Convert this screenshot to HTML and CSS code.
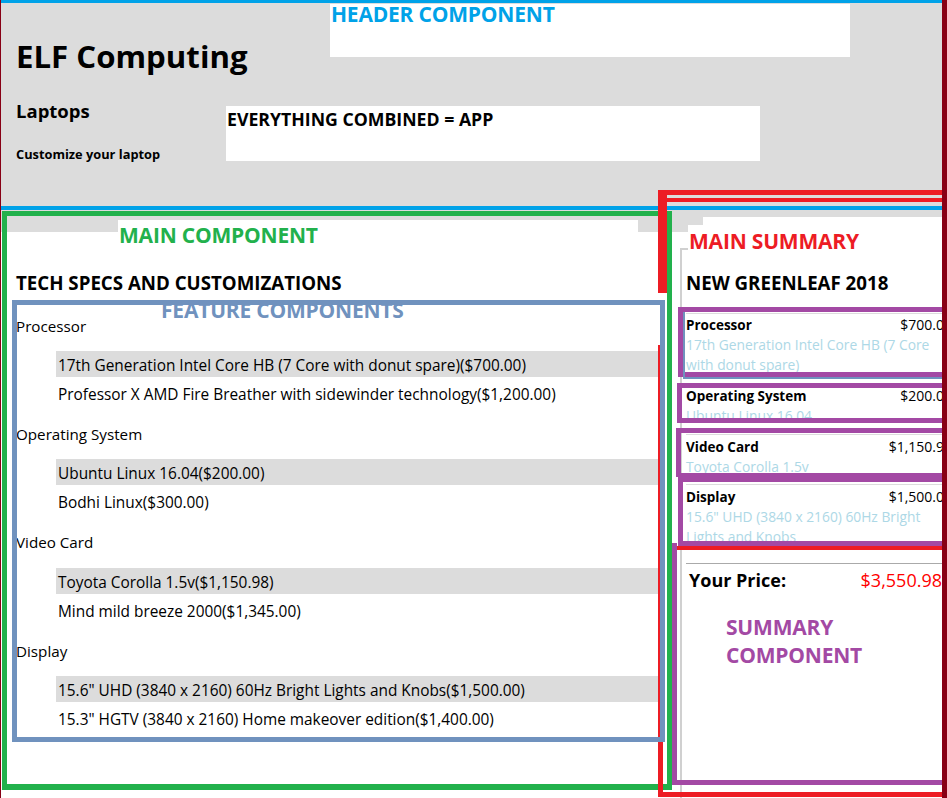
FILE: index.html
```html
<!DOCTYPE html>
<html lang="en">
<head>
<meta charset="utf-8">
<title>ELF Computing</title>
<link rel="stylesheet" href="styles.css">
</head>
<body>
<div class="app">
  <header class="header">
    <h1 class="header__title">ELF Computing</h1>
    <h3 class="header__sub">Laptops</h3>
    <h5 class="header__tag">Customize your laptop</h5>
  </header>
  <main class="main">
    <form class="main__form">
      <h2 class="main__heading">TECH SPECS AND CUSTOMIZATIONS</h2>
      <div class="feature">
        <div class="feature__name">Processor</div>
        <div class="feature__item feature__item--selected">17th Generation Intel Core HB (7 Core with donut spare)($700.00)</div>
        <div class="feature__item">Professor X AMD Fire Breather with sidewinder technology($1,200.00)</div>
      </div>
      <div class="feature">
        <div class="feature__name">Operating System</div>
        <div class="feature__item feature__item--selected">Ubuntu Linux 16.04($200.00)</div>
        <div class="feature__item">Bodhi Linux($300.00)</div>
      </div>
      <div class="feature">
        <div class="feature__name">Video Card</div>
        <div class="feature__item feature__item--selected">Toyota Corolla 1.5v($1,150.98)</div>
        <div class="feature__item">Mind mild breeze 2000($1,345.00)</div>
      </div>
      <div class="feature">
        <div class="feature__name">Display</div>
        <div class="feature__item feature__item--selected">15.6" UHD (3840 x 2160) 60Hz Bright Lights and Knobs($1,500.00)</div>
        <div class="feature__item">15.3" HGTV (3840 x 2160) Home makeover edition($1,400.00)</div>
      </div>
    </form>
    <section class="summary">
      <h2 class="main__heading summary__heading">NEW GREENLEAF 2018</h2>
      <div class="summary__option">
        <div class="summary__row"><span class="summary__name">Processor</span><span class="summary__cost">$700.00</span></div>
        <div class="summary__value">17th Generation Intel Core HB (7 Core with donut spare)</div>
      </div>
      <div class="summary__option">
        <div class="summary__row"><span class="summary__name">Operating System</span><span class="summary__cost">$200.00</span></div>
        <div class="summary__value">Ubuntu Linux 16.04</div>
      </div>
      <div class="summary__option">
        <div class="summary__row"><span class="summary__name">Video Card</span><span class="summary__cost">$1,150.98</span></div>
        <div class="summary__value">Toyota Corolla 1.5v</div>
      </div>
      <div class="summary__option">
        <div class="summary__row"><span class="summary__name">Display</span><span class="summary__cost">$1,500.00</span></div>
        <div class="summary__value">15.6" UHD (3840 x 2160) 60Hz Bright Lights and Knobs</div>
      </div>
      <div class="summary__total">
        <span class="summary__total-label">Your Price:</span>
        <span class="summary__total-value">$3,550.98</span>
      </div>
    </section>
  </main>

  <div class="notes">
    <div class="box box--header"></div>
    <div class="box box--main"></div>
    <div class="box box--summary"></div>
    <div class="bar bar--red-thick"></div>
    <div class="bar bar--red-thin"></div>
    <div class="bar bar--red-inner"></div>
    <div class="bar bar--red-divider"></div>
    <div class="box box--features"></div>
    <div class="box box--p1"></div>
    <div class="bar bar--steel-left"></div>
    <div class="bar bar--steel-bottom"></div>
    <div class="box box--p2"></div>
    <div class="box box--p3"></div>
    <div class="box box--p4"></div>
    <div class="box box--p5"></div>

    <div class="label label--header">HEADER COMPONENT</div>
    <div class="label label--app">EVERYTHING COMBINED = APP</div>
    <div class="label label--main">MAIN COMPONENT</div>
    <div class="label label--summary-cover"></div>
    <div class="label label--summary">MAIN SUMMARY</div>
    <div class="label label--features">FEATURE COMPONENTS</div>
    <div class="label label--summary-comp">SUMMARY<br>COMPONENT</div>

    <div class="box box--app"></div>
  </div>
</div>
</body>
</html>
```

FILE: styles.css
```css
html, body {
  margin: 0;
  padding: 0;
  background: #fff;
  overflow: hidden;
}

.app {
  position: relative;
  width: 947px;
  height: 798px;
  overflow: hidden;
  font-family: "Open Sans", "Noto Sans", sans-serif;
  color: #000;
}

/* ---------- header ---------- */
.header {
  height: 232px;
  box-sizing: border-box;
  background: #dcdcdc;
  padding: 40px 0 0 16px;
}

.header__title {
  margin: 0;
  font-size: 31.2px;
  line-height: 32px;
  font-weight: 700;
}

.header__sub {
  margin: 29.6px 0 0;
  font-size: 18.5px;
  line-height: 18.5px;
  font-weight: 700;
}

.header__tag {
  margin: 27.7px 0 0;
  font-size: 12.8px;
  line-height: 13px;
  font-weight: 700;
}

/* ---------- main ---------- */
.main {
  display: flex;
  align-items: flex-start;
}

.main__form {
  flex: none;
  width: 664px;
  margin: 0;
  padding: 42px 0 0 16px;
  box-sizing: border-box;
}

.main__heading {
  margin: 0;
  font-size: 18.7px;
  line-height: 18px;
  font-weight: 700;
}

.feature {
  margin-top: 23.5px;
}

.feature + .feature {
  margin-top: 17.7px;
}

.feature__name {
  font-size: 15.2px;
  line-height: 20px;
  margin-bottom: 15.5px;
}

.feature__item {
  margin-left: 40px;
  margin-right: 0;
  height: 26px;
  box-sizing: border-box;
  padding: 2.7px 0 0 2px;
  font-size: 15.4px;
  line-height: 23.3px;
  white-space: nowrap;
}

.feature__item + .feature__item {
  margin-top: 3.3px;
}

.feature__item--selected {
  background: #dcdcdc;
}

/* ---------- summary ---------- */
.summary {
  flex: none;
  width: 272px;
  min-height: 570px;
  margin: 16px 0 0 16px;
  box-sizing: border-box;
  border-left: 2px solid #d0d0d0;
  border-top: 2px solid #d0d0d0;
  padding: 0 0 0 4px;
}

.summary__heading {
  margin-top: 23.5px;
}

.summary__option {
  border-top: 1px solid #dcdcdc;
  padding: 1.5px 0 8px;
}

.summary__option:nth-of-type(3) {
  padding-top: 2.5px;
  padding-bottom: 7px;
}

.summary__heading + .summary__option {
  margin-top: 21.2px;
}

.summary__row {
  display: flex;
  justify-content: space-between;
  align-items: baseline;
  height: 20px;
  line-height: 20px;
  overflow: hidden;
}

.summary__name {
  font-size: 13.5px;
  font-weight: 700;
}

.summary__cost {
  font-size: 14px;
}

.summary__value {
  font-size: 13.8px;
  line-height: 20px;
  color: #add8e6;
}

.summary__total {
  margin-top: 8px;
  margin-right: 4px;
  border-top: 1px solid #aaa;
  display: flex;
  justify-content: space-between;
  align-items: baseline;
  padding: 4.5px 6px 0 3px;
  line-height: 24px;
  font-size: 18px;
}

.summary__total-label {
  font-weight: 700;
}

.summary__total-value {
  color: #f00;
}

/* ---------- annotation overlay ---------- */
.notes {
  position: absolute;
  left: 0;
  top: 0;
  width: 947px;
  height: 798px;
  pointer-events: none;
}

.box,
.bar,
.label {
  position: absolute;
  box-sizing: border-box;
}

.box--header {
  left: 0;
  top: 0;
  width: 947px;
  height: 210px;
  border-top: 3px solid #00a2e8;
  border-bottom: 4px solid #00a2e8;
}

.box--main {
  left: 2px;
  top: 211px;
  width: 670px;
  height: 579px;
  border: 5px solid #22b14c;
  border-bottom-width: 6px;
}

.box--summary {
  left: 658px;
  top: 190px;
  width: 295px;
  height: 607px;
  border: 5px solid #ed1c24;
  border-left: none;
}

.bar--red-thick {
  left: 658px;
  top: 190px;
  width: 9px;
  height: 103px;
  background: #ed1c24;
}

.bar--red-thin {
  left: 658px;
  top: 345px;
  width: 5px;
  height: 452px;
  background: #ed1c24;
}

.bar--red-inner {
  left: 663px;
  top: 198px;
  width: 290px;
  height: 4px;
  background: #ed1c24;
}

.bar--red-divider {
  left: 672px;
  top: 546px;
  width: 280px;
  height: 4px;
  background: #ed1c24;
}

.box--features {
  left: 12px;
  top: 300px;
  width: 653px;
  height: 442px;
  border: 5px solid #7092be;
}

.box--p1,
.box--p2,
.box--p3,
.box--p4,
.box--p5 {
  width: 285px;
  border: 5px solid #a349a4;
}

.box--p1 { left: 678px; top: 307px; height: 70px; }
.box--p2 { left: 677px; top: 383px; height: 40px; }
.box--p3 { left: 676px; top: 428px; height: 49px; border-bottom-width: 4px; }
.box--p4 { left: 678px; top: 477px; height: 69px; }
.box--p5 { left: 672px; top: 543px; height: 242px; border-top: none; }

.bar--steel-left {
  left: 683px;
  top: 312px;
  width: 2px;
  height: 67px;
  background: #7092be;
}

.bar--steel-bottom {
  left: 683px;
  top: 377px;
  width: 270px;
  height: 2px;
  background: #7092be;
}

.label {
  font-family: "Open Sans", "Noto Sans", sans-serif;
  font-weight: 700;
  font-size: 21px;
  line-height: 21px;
  letter-spacing: -0.2px;
  white-space: nowrap;
}

.label--header {
  left: 330px;
  top: 4px;
  width: 520px;
  height: 53px;
  background: #fff;
  color: #00a2e8;
  padding-left: 1px;
}

.label--app {
  left: 226px;
  top: 106px;
  width: 534px;
  height: 55px;
  background: #fff;
  color: #000;
  font-size: 17.7px;
  line-height: 20px;
  letter-spacing: 0;
  padding: 2.8px 0 0 1px;
}

.label--main {
  left: 118px;
  top: 220px;
  width: 520px;
  height: 30px;
  background: #fff;
  color: #22b14c;
  padding: 4.6px 0 0 1px;
}

.label--summary-cover {
  left: 703px;
  top: 217px;
  width: 240px;
  height: 10px;
  background: #fff;
}

.label--summary {
  left: 688px;
  top: 225px;
  width: 255px;
  height: 33px;
  background: #fff;
  color: #ed1c24;
  padding: 6.3px 0 0 1px;
}

.label--features {
  left: 161px;
  top: 299.6px;
  color: #7092be;
}

.label--summary-comp {
  left: 726px;
  top: 612.7px;
  color: #a349a4;
  line-height: 28.3px;
}

.box--app {
  left: 0;
  top: 0;
  width: 947px;
  height: 798px;
  border-left: 1px solid #880015;
  border-right: 5px solid #880015;
}
```
